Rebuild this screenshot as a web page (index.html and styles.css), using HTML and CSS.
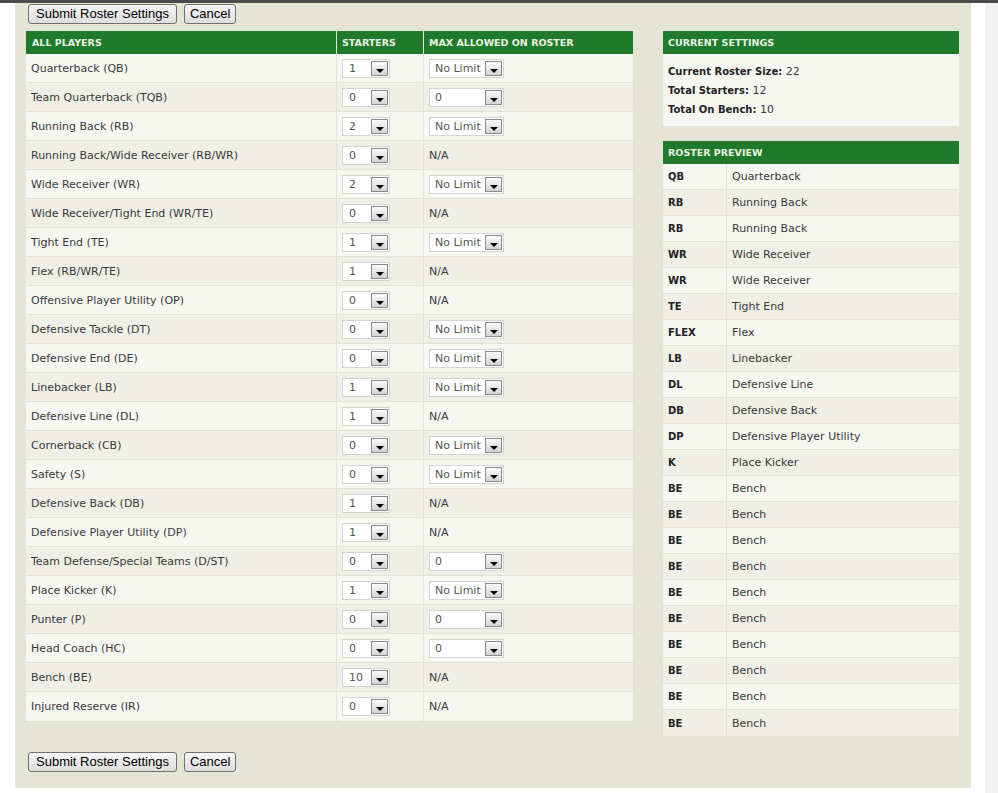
FILE: index.html
```html
<!DOCTYPE html>
<html>
<head>
<meta charset="utf-8">
<title>Roster Settings</title>
<link rel="stylesheet" href="styles.css">
</head>
<body>
<div class="topbar"></div>
<div class="page">
  <div class="panel">
    <div class="buttons">
      <button class="btn">Submit Roster Settings</button><button class="btn cancel">Cancel</button>
    </div>
    <div class="content">
      <div class="slots">
        <div class="row head">
          <div class="cell">ALL PLAYERS</div>
          <div class="cell">STARTERS</div>
          <div class="cell">MAX ALLOWED ON ROSTER</div>
        </div>
        <div class="row"><div class="cell">Quarterback (QB)</div><div class="cell"><span class="sel"><span class="val">1</span><span class="dd"></span></span></div><div class="cell"><span class="sel wide"><span class="val">No Limit</span><span class="dd"></span></span></div></div>
        <div class="row"><div class="cell">Team Quarterback (TQB)</div><div class="cell"><span class="sel"><span class="val">0</span><span class="dd"></span></span></div><div class="cell"><span class="sel wide"><span class="val">0</span><span class="dd"></span></span></div></div>
        <div class="row"><div class="cell">Running Back (RB)</div><div class="cell"><span class="sel"><span class="val">2</span><span class="dd"></span></span></div><div class="cell"><span class="sel wide"><span class="val">No Limit</span><span class="dd"></span></span></div></div>
        <div class="row"><div class="cell">Running Back/Wide Receiver (RB/WR)</div><div class="cell"><span class="sel"><span class="val">0</span><span class="dd"></span></span></div><div class="cell">N/A</div></div>
        <div class="row"><div class="cell">Wide Receiver (WR)</div><div class="cell"><span class="sel"><span class="val">2</span><span class="dd"></span></span></div><div class="cell"><span class="sel wide"><span class="val">No Limit</span><span class="dd"></span></span></div></div>
        <div class="row"><div class="cell">Wide Receiver/Tight End (WR/TE)</div><div class="cell"><span class="sel"><span class="val">0</span><span class="dd"></span></span></div><div class="cell">N/A</div></div>
        <div class="row"><div class="cell">Tight End (TE)</div><div class="cell"><span class="sel"><span class="val">1</span><span class="dd"></span></span></div><div class="cell"><span class="sel wide"><span class="val">No Limit</span><span class="dd"></span></span></div></div>
        <div class="row"><div class="cell">Flex (RB/WR/TE)</div><div class="cell"><span class="sel"><span class="val">1</span><span class="dd"></span></span></div><div class="cell">N/A</div></div>
        <div class="row"><div class="cell">Offensive Player Utility (OP)</div><div class="cell"><span class="sel"><span class="val">0</span><span class="dd"></span></span></div><div class="cell">N/A</div></div>
        <div class="row"><div class="cell">Defensive Tackle (DT)</div><div class="cell"><span class="sel"><span class="val">0</span><span class="dd"></span></span></div><div class="cell"><span class="sel wide"><span class="val">No Limit</span><span class="dd"></span></span></div></div>
        <div class="row"><div class="cell">Defensive End (DE)</div><div class="cell"><span class="sel"><span class="val">0</span><span class="dd"></span></span></div><div class="cell"><span class="sel wide"><span class="val">No Limit</span><span class="dd"></span></span></div></div>
        <div class="row"><div class="cell">Linebacker (LB)</div><div class="cell"><span class="sel"><span class="val">1</span><span class="dd"></span></span></div><div class="cell"><span class="sel wide"><span class="val">No Limit</span><span class="dd"></span></span></div></div>
        <div class="row"><div class="cell">Defensive Line (DL)</div><div class="cell"><span class="sel"><span class="val">1</span><span class="dd"></span></span></div><div class="cell">N/A</div></div>
        <div class="row"><div class="cell">Cornerback (CB)</div><div class="cell"><span class="sel"><span class="val">0</span><span class="dd"></span></span></div><div class="cell"><span class="sel wide"><span class="val">No Limit</span><span class="dd"></span></span></div></div>
        <div class="row"><div class="cell">Safety (S)</div><div class="cell"><span class="sel"><span class="val">0</span><span class="dd"></span></span></div><div class="cell"><span class="sel wide"><span class="val">No Limit</span><span class="dd"></span></span></div></div>
        <div class="row"><div class="cell">Defensive Back (DB)</div><div class="cell"><span class="sel"><span class="val">1</span><span class="dd"></span></span></div><div class="cell">N/A</div></div>
        <div class="row"><div class="cell">Defensive Player Utility (DP)</div><div class="cell"><span class="sel"><span class="val">1</span><span class="dd"></span></span></div><div class="cell">N/A</div></div>
        <div class="row"><div class="cell">Team Defense/Special Teams (D/ST)</div><div class="cell"><span class="sel"><span class="val">0</span><span class="dd"></span></span></div><div class="cell"><span class="sel wide"><span class="val">0</span><span class="dd"></span></span></div></div>
        <div class="row"><div class="cell">Place Kicker (K)</div><div class="cell"><span class="sel"><span class="val">1</span><span class="dd"></span></span></div><div class="cell"><span class="sel wide"><span class="val">No Limit</span><span class="dd"></span></span></div></div>
        <div class="row"><div class="cell">Punter (P)</div><div class="cell"><span class="sel"><span class="val">0</span><span class="dd"></span></span></div><div class="cell"><span class="sel wide"><span class="val">0</span><span class="dd"></span></span></div></div>
        <div class="row"><div class="cell">Head Coach (HC)</div><div class="cell"><span class="sel"><span class="val">0</span><span class="dd"></span></span></div><div class="cell"><span class="sel wide"><span class="val">0</span><span class="dd"></span></span></div></div>
        <div class="row"><div class="cell">Bench (BE)</div><div class="cell"><span class="sel"><span class="val">10</span><span class="dd"></span></span></div><div class="cell">N/A</div></div>
        <div class="row"><div class="cell">Injured Reserve (IR)</div><div class="cell"><span class="sel"><span class="val">0</span><span class="dd"></span></span></div><div class="cell">N/A</div></div>
      </div>
      <div class="side">
        <div class="box">
          <div class="boxhead">CURRENT SETTINGS</div>
          <div class="settings">
            <div><b>Current Roster Size:</b> 22</div>
            <div><b>Total Starters:</b> 12</div>
            <div><b>Total On Bench:</b> 10</div>
          </div>
        </div>
        <div class="box preview">
          <div class="boxhead">ROSTER PREVIEW</div>
          <div class="prow"><div class="pos">QB</div><div class="pname">Quarterback</div></div>
          <div class="prow"><div class="pos">RB</div><div class="pname">Running Back</div></div>
          <div class="prow"><div class="pos">RB</div><div class="pname">Running Back</div></div>
          <div class="prow"><div class="pos">WR</div><div class="pname">Wide Receiver</div></div>
          <div class="prow"><div class="pos">WR</div><div class="pname">Wide Receiver</div></div>
          <div class="prow"><div class="pos">TE</div><div class="pname">Tight End</div></div>
          <div class="prow"><div class="pos">FLEX</div><div class="pname">Flex</div></div>
          <div class="prow"><div class="pos">LB</div><div class="pname">Linebacker</div></div>
          <div class="prow"><div class="pos">DL</div><div class="pname">Defensive Line</div></div>
          <div class="prow"><div class="pos">DB</div><div class="pname">Defensive Back</div></div>
          <div class="prow"><div class="pos">DP</div><div class="pname">Defensive Player Utility</div></div>
          <div class="prow"><div class="pos">K</div><div class="pname">Place Kicker</div></div>
          <div class="prow"><div class="pos">BE</div><div class="pname">Bench</div></div>
          <div class="prow"><div class="pos">BE</div><div class="pname">Bench</div></div>
          <div class="prow"><div class="pos">BE</div><div class="pname">Bench</div></div>
          <div class="prow"><div class="pos">BE</div><div class="pname">Bench</div></div>
          <div class="prow"><div class="pos">BE</div><div class="pname">Bench</div></div>
          <div class="prow"><div class="pos">BE</div><div class="pname">Bench</div></div>
          <div class="prow"><div class="pos">BE</div><div class="pname">Bench</div></div>
          <div class="prow"><div class="pos">BE</div><div class="pname">Bench</div></div>
          <div class="prow"><div class="pos">BE</div><div class="pname">Bench</div></div>
          <div class="prow"><div class="pos">BE</div><div class="pname">Bench</div></div>
        </div>
      </div>
    </div>
    <div class="buttons bottom">
      <button class="btn">Submit Roster Settings</button><button class="btn cancel">Cancel</button>
    </div>
  </div>
  <div class="gutter"></div>
  <div class="scroll"></div>
</div>
</body>
</html>
```
FILE: styles.css
```css
html, body {
  margin: 0;
  padding: 0;
  background: #ffffff;
  font-family: "DejaVu Sans", Verdana, sans-serif;
  font-size: 11px;
  color: #3a3a3a;
}

.topbar {
  height: 3px;
  background: #4b4b4b;
}

.page {
  display: flex;
  height: 790px;
}

.panel {
  margin-left: 15px;
  width: 956px;
  height: 785px;
  box-sizing: border-box;
  background: #e5e5d6;
  padding: 1px 12px 0 11px;
}

.buttons {
  display: flex;
  gap: 7px;
  padding-left: 2px;
  height: 20px;
}

.buttons.bottom {
  margin-top: 16px;
}

.btn {
  height: 20px;
  margin: 0;
  padding: 0 7px;
  font-family: "Liberation Sans", Arial, sans-serif;
  font-size: 13px;
  color: #000;
  background: linear-gradient(#f6f6f6, #dedede);
  border: 1px solid #707070;
  border-radius: 3px;
  line-height: 18px;
}

.btn.cancel {
  padding: 0 5px;
}

.content {
  display: flex;
  gap: 30px;
  margin-top: 7px;
  height: 705px;
  align-items: flex-start;
}

/* left table */
.slots {
  width: 607px;
}

.row {
  display: grid;
  grid-template-columns: 310px 87px 210px;
  height: 29px;
  box-sizing: border-box;
  border-bottom: 1px solid #e2e2d8;
}

.row:nth-child(even) {
  background: #f7f7f2;
}

.row:nth-child(odd) {
  background: #efefe6;
}

.row:last-child {
  border-bottom: none;
}

.cell {
  display: flex;
  align-items: center;
  padding-left: 5px;
  box-sizing: border-box;
  white-space: nowrap;
}

.cell + .cell {
  border-left: 1px solid #e2e2d8;
}

.row.head {
  height: 23px;
  background: #1f7a2b;
  border-bottom: none;
  font-size: 9.5px;
  font-weight: bold;
  color: #e9f2e2;
}

.row.head .cell:first-child {
  padding-left: 6px;
}

.row.head .cell + .cell {
  border-left: 1px solid #dfe9d8;
}

/* fake select */
.sel {
  display: inline-flex;
  align-items: center;
  justify-content: space-between;
  width: 48px;
  height: 19px;
  box-sizing: border-box;
  border: 1px solid #d4d4d0;
  background: #ffffff;
  padding: 0 1px 0 6px;
  color: #555555;
  font-size: 11px;
}

.sel.wide {
  width: 75px;
  padding-left: 5px;
}

.dd {
  position: relative;
  width: 17px;
  height: 15px;
  box-sizing: border-box;
  border: 1px solid #8a8a8a;
  background: linear-gradient(#fbfbfb, #d3d3d3);
}

.dd::after {
  content: "";
  position: absolute;
  left: 4px;
  bottom: 2px;
  border-left: 4px solid transparent;
  border-right: 4px solid transparent;
  border-top: 4px solid #000000;
}

/* right column */
.side {
  width: 296px;
  display: flex;
  flex-direction: column;
  gap: 15px;
}

.boxhead {
  height: 23px;
  display: flex;
  align-items: center;
  padding-left: 5px;
  background: #1f7a2b;
  color: #e9f2e2;
  font-size: 9.5px;
  font-weight: bold;
}

.settings {
  background: #f7f7f2;
  padding: 8px 5px 7px;
  line-height: 19px;
}

.settings b {
  font-size: 10px;
  color: #222222;
}

.prow {
  display: grid;
  grid-template-columns: 63px 233px;
  height: 26px;
  box-sizing: border-box;
  border-bottom: 1px solid #e2e2d8;
}

.prow:nth-child(even) {
  background: #f7f7f2;
}

.prow:nth-child(odd) {
  background: #efefe6;
}

.prow:last-child {
  border-bottom: none;
}

.pos, .pname {
  display: flex;
  align-items: center;
  padding-left: 5px;
}

.pos {
  font-size: 10px;
  font-weight: bold;
  color: #222222;
}

.pname {
  border-left: 1px solid #e2e2d8;
}

.gutter {
  width: 14px;
}

.scroll {
  width: 13px;
  background: #f1f1f1;
}
```
